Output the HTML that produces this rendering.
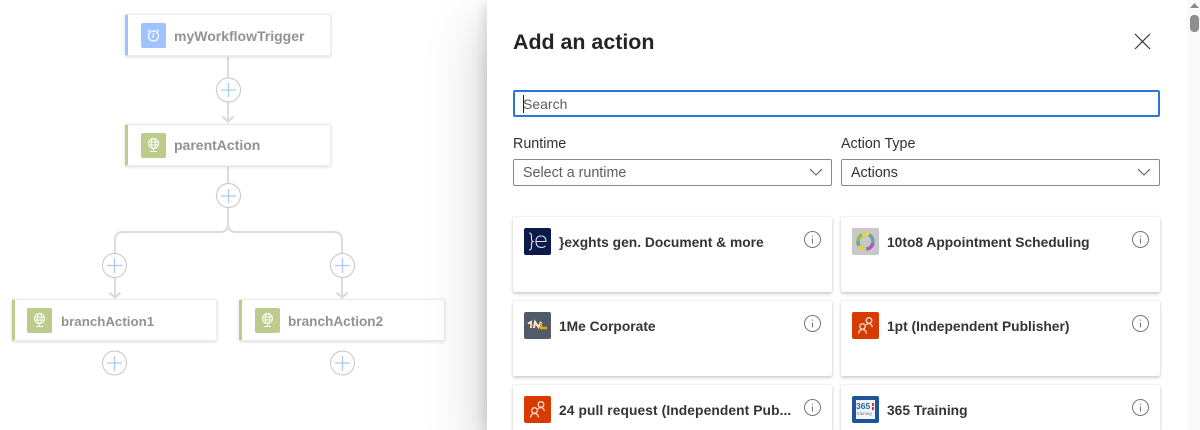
<!DOCTYPE html>
<html lang="en">
<head>
<meta charset="utf-8">
<title>Add an action</title>
<style>
*{box-sizing:border-box}
html{margin:0;padding:0;width:1200px;height:430px;overflow:hidden;background:#fff}
body{margin:0;padding:0;position:relative;width:1200px;height:430px;overflow:hidden;background:#fff;font-family:"Liberation Sans",sans-serif}
.abs,.node,.card,.t,.sel{position:absolute}
.node{width:206px;height:42px;background:#fff;border:1px solid #ececec;border-left:3px solid #bccc8c;border-radius:2px;box-shadow:0 1px 3px rgba(0,0,0,.14)}
.node.blue{border-left-color:#a0c3ff}
.ic{position:absolute;left:13px;top:8px;width:25px;height:25px;border-radius:2px;background:#bccc8c}
.blue .ic{background:#a0c3ff}
.nt{position:absolute;left:46px;top:12px;font-size:14px;line-height:18px;font-weight:700;color:#929292;white-space:nowrap}
.sel{top:159px;width:319px;height:27px;border:1px solid #8a8886;border-radius:2px;background:#fff;font-size:14.300px;line-height:27px;padding-left:9px;color:#605e5c}
.lab{position:absolute;top:136px;font-size:14.300px;line-height:17px;color:#323130}
.card{width:319px;height:75px;background:#fff;border-radius:2px;box-shadow:0 1.600px 3.600px rgba(0,0,0,.16),0 .3px 2px rgba(0,0,0,.1)}
.logo{position:absolute;left:11px;top:11px;width:27px;height:27px;border-radius:2px;overflow:hidden}
.ct{position:absolute;left:46px;top:17px;font-size:13.800px;line-height:18px;font-weight:700;color:#353432;white-space:nowrap}
.inf{position:absolute;left:290px;top:13px;width:19px;height:19px}
</style>
</head>
<body>

<svg class="abs" style="left:0;top:0" width="487" height="430" viewBox="0 0 487 430" fill="none">
  <g stroke="#dcdcdc" stroke-width="2">
    <path d="M228 57V120"/>
    <path d="M222.500 116.500l5.500 5 5.500-5" stroke-width="2.300"/>
    <path d="M228 167V224Q228 232 220 232H123Q115 232 115 240V296"/>
    <path d="M228 224Q228 232 236 232H334Q342 232 342 240V296"/>
    <path d="M109.500 292.500l5.500 5 5.500-5" stroke-width="2.300"/>
    <path d="M336.500 292.500l5.500 5 5.500-5" stroke-width="2.300"/>
  </g>
  <g fill="#fff" stroke="#c6c6c6" stroke-width="1">
    <circle cx="228.500" cy="90" r="12"/>
    <circle cx="228.500" cy="195.500" r="12"/>
    <circle cx="114.500" cy="265.500" r="12"/>
    <circle cx="342.500" cy="265.500" r="12"/>
    <circle cx="114.500" cy="363" r="12"/>
    <circle cx="342.500" cy="363" r="12"/>
  </g>
  <g stroke="#a9c9f5" stroke-width="1.300">
    <path d="M221 90h15M228.500 83v14"/>
    <path d="M221 196h15M228.500 189v14"/>
    <path d="M107 265.500h15M114.500 258v15"/>
    <path d="M335 265.500h15M342.500 258v15"/>
    <path d="M107 363h15M114.500 356v15"/>
    <path d="M335 363h15M342.500 356v15"/>
  </g>
</svg>

<div class="node blue" style="left:125px;top:14px">
  <div class="ic">
    <svg width="25" height="25" viewBox="0 0 25 25" fill="none" stroke="#fff" stroke-width="1.200"><circle cx="12.500" cy="13" r="5"/><path d="M12.500 10v3l-1.500 1.500M7 8.500l2-2M18 8.500l-2-2"/></svg>
  </div>
  <div class="nt">myWorkflowTrigger</div>
</div>
<div class="node" style="left:125px;top:124px">
  <div class="ic"><svg width="25" height="25" viewBox="0 0 25 25" fill="none" stroke="#fff" stroke-width=".9"><circle cx="12.500" cy="10.500" r="5"/><ellipse cx="12.500" cy="10.500" rx="2.200" ry="5"/><path d="M7.800 9h9.400M7.800 12h9.400M12.500 15.500v2.500M9 18.500h7"/></svg></div>
  <div class="nt" style="top:11px">parentAction</div>
</div>
<div class="node" style="left:12px;top:299px;width:205px">
  <div class="ic" style="left:12px"><svg width="25" height="25" viewBox="0 0 25 25" fill="none" stroke="#fff" stroke-width=".9"><circle cx="12.500" cy="10.500" r="5"/><ellipse cx="12.500" cy="10.500" rx="2.200" ry="5"/><path d="M7.800 9h9.400M7.800 12h9.400M12.500 15.500v2.500M9 18.500h7"/></svg></div>
  <div class="nt" style="font-size:13.300px;top:13px">branchAction1</div>
</div>
<div class="node" style="left:239px;top:299px">
  <div class="ic"><svg width="25" height="25" viewBox="0 0 25 25" fill="none" stroke="#fff" stroke-width=".9"><circle cx="12.500" cy="10.500" r="5"/><ellipse cx="12.500" cy="10.500" rx="2.200" ry="5"/><path d="M7.800 9h9.400M7.800 12h9.400M12.500 15.500v2.500M9 18.500h7"/></svg></div>
  <div class="nt" style="font-size:13.600px;top:13px">branchAction2</div>
</div>

<div class="abs" style="left:487px;top:0;width:700px;height:430px;background:#fff;box-shadow:0 25.600px 57.600px rgba(0,0,0,.22),0 4.800px 14.400px rgba(0,0,0,.18)"></div>

<div class="abs" style="left:513px;top:28px;font-size:21.400px;line-height:29px;font-weight:700;color:#252423;white-space:nowrap">Add an action</div>
<svg class="abs" style="left:1134px;top:33px" width="17" height="17" viewBox="0 0 17 17" fill="none" stroke="#3b3a39" stroke-width="1.200"><path d="M1 1l15 15M16 1L1 16"/></svg>

<div class="abs" style="left:513px;top:90px;width:647px;height:27px;border:2px solid #2b78d4;border-radius:2px;background:#fff">
  <span class="abs" style="left:8px;top:4px;font-size:14px;line-height:17px;color:#605e5c">Search</span>
  <span class="abs" style="left:8px;top:3px;width:1px;height:18px;background:#222"></span>
</div>

<div class="lab" style="left:513px">Runtime</div>
<div class="lab" style="left:841px">Action Type</div>
<div class="sel" style="left:513px">Select a runtime
  <svg class="abs" style="left:295px;top:8px" width="14" height="9" viewBox="0 0 14 9" fill="none" stroke="#605e5c" stroke-width="1.100"><path d="M1 1l6 6 6-6"/></svg>
</div>
<div class="sel" style="left:841px;color:#323130">Actions
  <svg class="abs" style="left:295px;top:8px" width="14" height="9" viewBox="0 0 14 9" fill="none" stroke="#605e5c" stroke-width="1.100"><path d="M1 1l6 6 6-6"/></svg>
</div>

<div class="card" style="left:513px;top:217px">
  <div class="logo" style="background:#0b1a48"><svg width="27" height="27" viewBox="0 0 27 27" fill="none" stroke="#dfe3ee" stroke-width="1.100"><path d="M5 5q2.500 0 2.500 3v3q0 2 1.500 2.500q-1.500 .5-1.500 2.500v3q0 3-2.500 3"/><path d="M12 13.500h10q0-5.500-5-5.500t-5 5.500 5 6q2.800 0 4.500-1.500"/></svg></div>
  <div class="ct">}exghts gen. Document &amp; more</div>
  <svg class="inf" viewBox="0 0 19 19" fill="none" stroke="#777"><circle cx="9.500" cy="9.500" r="8"/><path d="M9.500 8.500v5M9.500 5.500v1.200"/></svg>
</div>
<div class="card" style="left:841px;top:217px">
  <div class="logo" style="background:#c8c8c8"><svg width="27" height="27" viewBox="0 0 27 27" fill="none" stroke-width="3.400"><circle cx="13.500" cy="13.500" r="7.500" stroke="#6b9fb0"/><path d="M6 13.500a7.500 7.500 0 0 1 4-6.600" stroke="#8fc03a"/><path d="M10 6.900a7.500 7.500 0 0 1 7 0" stroke="#e6d84a"/><path d="M21 15.500a7.500 7.500 0 0 1-6 5.500" stroke="#b454c0"/><path d="M7 17.500a7.500 7.500 0 0 0 7 3.500" stroke="#e8cf3c"/></svg></div>
  <div class="ct">10to8 Appointment Scheduling</div>
  <svg class="inf" viewBox="0 0 19 19" fill="none" stroke="#777"><circle cx="9.500" cy="9.500" r="8"/><path d="M9.500 8.500v5M9.500 5.500v1.200"/></svg>
</div>
<div class="card" style="left:513px;top:301px">
  <div class="logo" style="background:#505a68"><svg width="27" height="27" viewBox="0 0 27 27" fill="none"><path d="M4 11.500l3-1.500v6M10 16l1-6 3.500 5 2.500-5v6" stroke="#f4ecd4" stroke-width="2"/><path d="M17 11v5h6" stroke="#e2a81f" stroke-width="2.400"/><path d="M6 13.500h4" stroke="#e2a81f" stroke-width="1.500"/></svg></div>
  <div class="ct">1Me Corporate</div>
  <svg class="inf" viewBox="0 0 19 19" fill="none" stroke="#777"><circle cx="9.500" cy="9.500" r="8"/><path d="M9.500 8.500v5M9.500 5.500v1.200"/></svg>
</div>
<div class="card" style="left:841px;top:301px">
  <div class="logo" style="background:#d83b01"><svg width="27" height="27" viewBox="0 0 27 27" fill="none" stroke="#fbd9cc" stroke-width="1.300"><circle cx="10.500" cy="14.500" r="2.800"/><path d="M6.500 21.500q.5-4 4-4t4 4"/><circle cx="17" cy="8.500" r="2.800"/><path d="M14 13q1-1.500 3-1.500t3.500 3.500"/></svg></div>
  <div class="ct">1pt (Independent Publisher)</div>
  <svg class="inf" viewBox="0 0 19 19" fill="none" stroke="#777"><circle cx="9.500" cy="9.500" r="8"/><path d="M9.500 8.500v5M9.500 5.500v1.200"/></svg>
</div>
<div class="card" style="left:513px;top:385px;height:45px;border-radius:2px 2px 0 0">
  <div class="logo" style="background:#d83b01"><svg width="27" height="27" viewBox="0 0 27 27" fill="none" stroke="#fbd9cc" stroke-width="1.300"><circle cx="10.500" cy="14.500" r="2.800"/><path d="M6.500 21.500q.5-4 4-4t4 4"/><circle cx="17" cy="8.500" r="2.800"/><path d="M14 13q1-1.500 3-1.500t3.500 3.500"/></svg></div>
  <div class="ct" style="letter-spacing:.09px">24 pull request (Independent Pub...</div>
  <svg class="inf" viewBox="0 0 19 19" fill="none" stroke="#777"><circle cx="9.500" cy="9.500" r="8"/><path d="M9.500 8.500v5M9.500 5.500v1.200"/></svg>
</div>
<div class="card" style="left:841px;top:385px;height:45px;border-radius:2px 2px 0 0">
  <div class="logo" style="background:#1f5497">
    <div class="abs" style="left:4px;top:4px;width:19px;height:19px;background:#f2f4f7"></div>
    <span class="abs" style="left:4px;top:6px;font-size:8.500px;line-height:9px;font-weight:700;color:#2a62ad">365</span>
    <span class="abs" style="left:20px;top:7px;width:2px;height:3px;background:#d8352a"></span>
    <span class="abs" style="left:20px;top:11px;width:2px;height:3px;background:#d8352a"></span>
    <span class="abs" style="left:5px;top:15px;font-size:4.500px;line-height:6px;color:#6d7786">training</span>
  </div>
  <div class="ct">365 Training</div>
  <svg class="inf" viewBox="0 0 19 19" fill="none" stroke="#777"><circle cx="9.500" cy="9.500" r="8"/><path d="M9.500 8.500v5M9.500 5.500v1.200"/></svg>
</div>

<div class="abs" style="left:1187px;top:0;width:13px;height:430px;background:#fafafa"></div>
<svg class="abs" style="left:1189px;top:2px" width="11" height="7" viewBox="0 0 11 7"><path d="M1 6L5.500 1 10 6z" fill="#8a8a8a"/></svg>
<div class="abs" style="left:1190px;top:15px;width:9px;height:17px;border-radius:4px;background:#8f8f8f"></div>

</body>
</html>
